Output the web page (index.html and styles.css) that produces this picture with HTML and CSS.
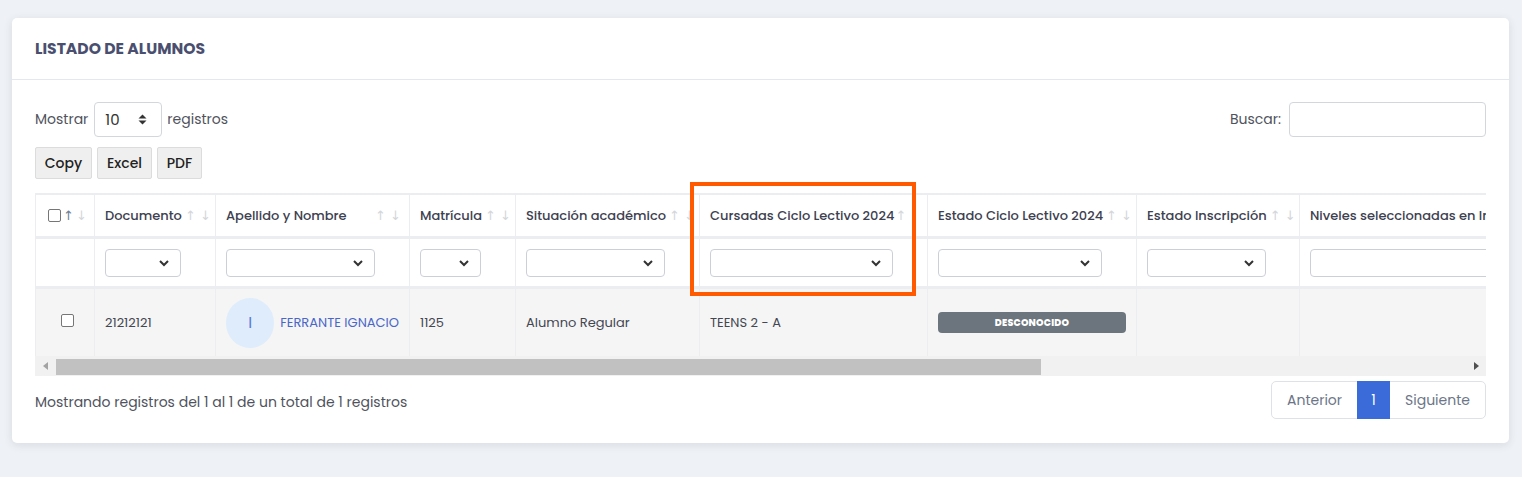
FILE: index.html
```html
<!DOCTYPE html>
<html lang="es">
<head>
<meta charset="utf-8">
<title>Listado de alumnos</title>
<link rel="stylesheet" href="styles.css">
</head>
<body>
<div class="card">
  <div class="card-header"><h2 class="card-title">LISTADO DE ALUMNOS</h2></div>
  <div class="card-body">
    <div class="top-row">
      <label class="length">Mostrar
        <span class="len-select">10
          <svg class="updown" width="9" height="11" viewBox="0 0 9 11"><path d="M0.5 4.5 L4.5 0.5 L8.5 4.5 Z M0.5 6.5 L4.5 10.5 L8.5 6.5 Z" fill="#333"/></svg>
        </span>
        registros</label>
      <label class="search">Buscar: <span class="search-input"></span></label>
    </div>
    <div class="buttons">
      <span class="btn btn-copy">Copy</span>
      <span class="btn btn-excel">Excel</span>
      <span class="btn btn-pdf">PDF</span>
    </div>
    <div class="table-wrap">
      <table class="grid">
        <colgroup>
          <col class="c1"><col class="c2"><col class="c3"><col class="c4"><col class="c5"><col class="c6"><col class="c7"><col class="c8"><col class="c9">
        </colgroup>
        <thead>
          <tr class="head">
            <th class="th-check"><div class="th-inner"><span class="cb"></span><span class="arr"><span class="up on">↑</span><span class="dn">↓</span></span></div></th>
            <th><div class="th-inner"><span class="th-text">Documento</span><span class="arr"><span class="up">↑</span><span class="dn">↓</span></span></div></th>
            <th><div class="th-inner"><span class="th-text">Apellido y Nombre</span><span class="arr"><span class="up">↑</span><span class="dn">↓</span></span></div></th>
            <th><div class="th-inner"><span class="th-text">Matrícula</span><span class="arr"><span class="up">↑</span><span class="dn">↓</span></span></div></th>
            <th><div class="th-inner"><span class="th-text">Situación académico</span><span class="arr"><span class="up">↑</span><span class="dn">↓</span></span></div></th>
            <th><div class="th-inner"><span class="th-text tight">Cursadas Ciclo Lectivo 2024</span><span class="arr"><span class="up">↑</span></span></div></th>
            <th><div class="th-inner"><span class="th-text">Estado Ciclo Lectivo 2024</span><span class="arr"><span class="up">↑</span><span class="dn">↓</span></span></div></th>
            <th><div class="th-inner"><span class="th-text">Estado Inscripción</span><span class="arr"><span class="up">↑</span><span class="dn">↓</span></span></div></th>
            <th><div class="th-inner"><span class="th-text">Niveles seleccionadas en Inscripción</span></div></th>
          </tr>
          <tr class="filters">
            <td></td>
            <td><span class="fsel w76"><svg class="chev" width="12" height="8" viewBox="0 0 12 8"><path d="M2 2 L6 6 L10 2" fill="none" stroke="#333" stroke-width="2"/></svg></span></td>
            <td><span class="fsel w149"><svg class="chev" width="12" height="8" viewBox="0 0 12 8"><path d="M2 2 L6 6 L10 2" fill="none" stroke="#333" stroke-width="2"/></svg></span></td>
            <td><span class="fsel w61"><svg class="chev" width="12" height="8" viewBox="0 0 12 8"><path d="M2 2 L6 6 L10 2" fill="none" stroke="#333" stroke-width="2"/></svg></span></td>
            <td><span class="fsel w139"><svg class="chev" width="12" height="8" viewBox="0 0 12 8"><path d="M2 2 L6 6 L10 2" fill="none" stroke="#333" stroke-width="2"/></svg></span></td>
            <td><span class="fsel w183"><svg class="chev" width="12" height="8" viewBox="0 0 12 8"><path d="M2 2 L6 6 L10 2" fill="none" stroke="#333" stroke-width="2"/></svg></span></td>
            <td><span class="fsel w164"><svg class="chev" width="12" height="8" viewBox="0 0 12 8"><path d="M2 2 L6 6 L10 2" fill="none" stroke="#333" stroke-width="2"/></svg></span></td>
            <td><span class="fsel w119"><svg class="chev" width="12" height="8" viewBox="0 0 12 8"><path d="M2 2 L6 6 L10 2" fill="none" stroke="#333" stroke-width="2"/></svg></span></td>
            <td><span class="fsel w300"></span></td>
          </tr>
        </thead>
        <tbody>
          <tr class="row">
            <td class="td-check"><span class="cb"></span></td>
            <td>21212121</td>
            <td><div class="person"><span class="avatar">I</span><a class="name">FERRANTE IGNACIO</a></div></td>
            <td>1125</td>
            <td>Alumno Regular</td>
            <td>TEENS 2 - A</td>
            <td><span class="badge">DESCONOCIDO</span></td>
            <td></td>
            <td></td>
          </tr>
        </tbody>
      </table>
      <div class="scrollbar">
        <span class="sb-arrow sb-left"><svg width="6" height="8" viewBox="0 0 6 8"><path d="M5 0 L0 4 L5 8 Z" fill="#a3a3a3"/></svg></span>
        <span class="sb-track"><span class="sb-thumb"></span></span>
        <span class="sb-arrow sb-right"><svg width="6" height="8" viewBox="0 0 6 8"><path d="M1 0 L6 4 L1 8 Z" fill="#505050"/></svg></span>
      </div>
    </div>
    <div class="bottom-row">
      <div class="info">Mostrando registros del 1 al 1 de un total de 1 registros</div>
      <div class="pager">
        <span class="pg pg-prev">Anterior</span>
        <span class="pg pg-cur">1</span>
        <span class="pg pg-next">Siguiente</span>
      </div>
    </div>
  </div>
</div>
<div class="highlight"></div>
</body>
</html>
```
FILE: styles.css
```css
html, body {
  margin: 0;
  padding: 0;
}
body {
  background: #eef1f5;
  font-family: "Poppins", "Open Sans", "Noto Sans", sans-serif;
  color: #4b4f5c;
  font-size: 14px;
  position: relative;
  padding: 18px 13px 34px 12px;
}
.card {
  background: #fff;
  border-radius: 5px;
  box-shadow: 0 2px 8px rgba(60, 70, 90, 0.12);
  height: 425px;
  box-sizing: border-box;
}
.card-header {
  height: 62px;
  box-sizing: border-box;
  border-bottom: 1px solid #e3e7ee;
  display: flex;
  align-items: center;
  padding: 0 23px;
}
.card-title {
  margin: 0;
  font-size: 15.6px;
  font-weight: 700;
  color: #4a4f70;
}
.card-body {
  padding: 22px 23px 0 23px;
}
.top-row {
  display: flex;
  justify-content: space-between;
  align-items: center;
  height: 35px;
}
.length, .search {
  display: flex;
  align-items: center;
  gap: 5px;
  color: #50535d;
}
.len-select {
  width: 68px;
  height: 35px;
  box-sizing: border-box;
  border: 1px solid #d3d6db;
  border-radius: 4px;
  display: flex;
  align-items: center;
  justify-content: space-between;
  padding: 0 14px 0 10px;
  color: #333;
  font-size: 15px;
  margin-left: 1px;
}
.search-input {
  width: 197px;
  height: 35px;
  box-sizing: border-box;
  border: 1px solid #d3d6db;
  border-radius: 4px;
}
.search { gap: 8px; }
.buttons {
  display: flex;
  gap: 5px;
  margin-top: 10px;
}
.btn {
  height: 32px;
  box-sizing: border-box;
  background: #efefef;
  border: 1px solid #dcdcdc;
  border-radius: 2px;
  display: flex;
  align-items: center;
  justify-content: center;
  font-weight: 500;
  color: #222;
  font-size: 14px;
}
.btn-copy { width: 57px; }
.btn-excel { width: 55px; }
.btn-pdf { width: 45px; }
.table-wrap {
  margin-top: 14px;
  overflow: hidden;
  width: 1451px;
}
.grid {
  border-collapse: collapse;
  table-layout: fixed;
  width: 2076px;
  font-size: 13px;
}
.c1 { width: 59px; }
.c2 { width: 121px; }
.c3 { width: 194px; }
.c4 { width: 106px; }
.c5 { width: 184px; }
.c6 { width: 228px; }
.c7 { width: 209px; }
.c8 { width: 163px; }
.c9 { width: 812px; }
.grid th, .grid td {
  border-left: 1px solid #ebedf0;
  border-right: 1px solid #ebedf0;
  padding: 0 10px;
  text-align: left;
  white-space: nowrap;
  overflow: hidden;
}
.grid tr.head th {
  border-top: 2px solid #ebedf0;
  border-bottom: 3px solid #ebedf0;
  height: 41px;
  font-weight: 500;
  color: #3d4150;
  padding-right: 8px;
}
.th-inner {
  display: flex;
  align-items: center;
}
.th-text {
  flex: 0 0 auto;
  margin-right: auto;
  padding-right: 3px;
}
.th-text.tight {
  margin-right: 0;
  padding-right: 1px;
}
.grid tr.head th.th-check {
  padding-left: 12px;
  padding-right: 4px;
}
.th-check .th-inner { gap: 2px; }
.th-check .arr { gap: 2px; }
.arr {
  display: flex;
  gap: 4px;
  font-size: 13px;
  color: #d4d6da;
  font-family: "DejaVu Sans", sans-serif;
  flex: 0 0 auto;
}
.arr .up, .arr .dn { width: 11px; text-align: center; }
.arr .on { color: #6e7e95; }
.cb {
  display: inline-block;
  flex: 0 0 auto;
  width: 13px;
  height: 13px;
  box-sizing: border-box;
  border: 1px solid #767676;
  border-radius: 2px;
  background: #fff;
}
.grid tr.filters td {
  height: 47px;
  border-bottom: 3px solid #ebedf0;
}
.fsel {
  display: flex;
  align-items: center;
  justify-content: flex-end;
  height: 28px;
  box-sizing: border-box;
  border: 1px solid #ccd0d6;
  border-radius: 4px;
  padding-right: 10px;
  background: #fff;
}
.w76 { width: 76px; }
.w149 { width: 149px; }
.w61 { width: 61px; }
.w139 { width: 139px; }
.w183 { width: 183px; }
.w164 { width: 164px; }
.w119 { width: 119px; }
.w300 { width: 300px; }
.grid tr.row td {
  background: #f5f5f5;
  height: 67px;
  color: #444752;
}
.td-check { text-align: center !important; padding-left: 14px !important; }
.person {
  display: flex;
  align-items: center;
  gap: 6px;
}
.avatar {
  width: 50px;
  height: 50px;
  border-radius: 50%;
  background: #deecfc;
  color: #5a7bd6;
  display: flex;
  align-items: center;
  justify-content: center;
  font-size: 16px;
}
.name {
  color: #4a67c8;
  font-size: 13px;
}
.badge {
  display: flex;
  align-items: center;
  justify-content: center;
  width: 188px;
  height: 21px;
  background: #6c757d;
  color: #fff;
  border-radius: 4px;
  font-size: 9.5px;
  font-weight: 800;
  letter-spacing: 0.2px;
}
.scrollbar {
  display: flex;
  height: 20px;
  background: #f1f1f1;
  align-items: stretch;
}
.sb-arrow {
  width: 21px;
  display: flex;
  align-items: center;
  justify-content: center;
}
.sb-track {
  flex: 1;
  display: flex;
  padding-top: 3px;
  padding-bottom: 1px;
}
.sb-thumb {
  width: 985px;
  background: #c1c1c1;
}
.bottom-row {
  display: flex;
  justify-content: space-between;
  align-items: center;
  margin-top: 5px;
}
.info {
  color: #50535d;
  padding-top: 4px;
}
.pager {
  display: flex;
  height: 38px;
  border: 1px solid #dee2e6;
  border-radius: 5px;
  box-sizing: border-box;
}
.pg {
  display: flex;
  align-items: center;
  justify-content: center;
  color: #6c7688;
}
.pg-prev { width: 85px; }
.pg-cur { width: 33px; background: #3a6bd9; color: #fff; margin: -1px 0; }
.pg-next { width: 95px; }
.highlight {
  position: absolute;
  left: 690px;
  top: 182px;
  width: 226px;
  height: 114px;
  box-sizing: border-box;
  border: 4px solid #ff5a00;
}
```
